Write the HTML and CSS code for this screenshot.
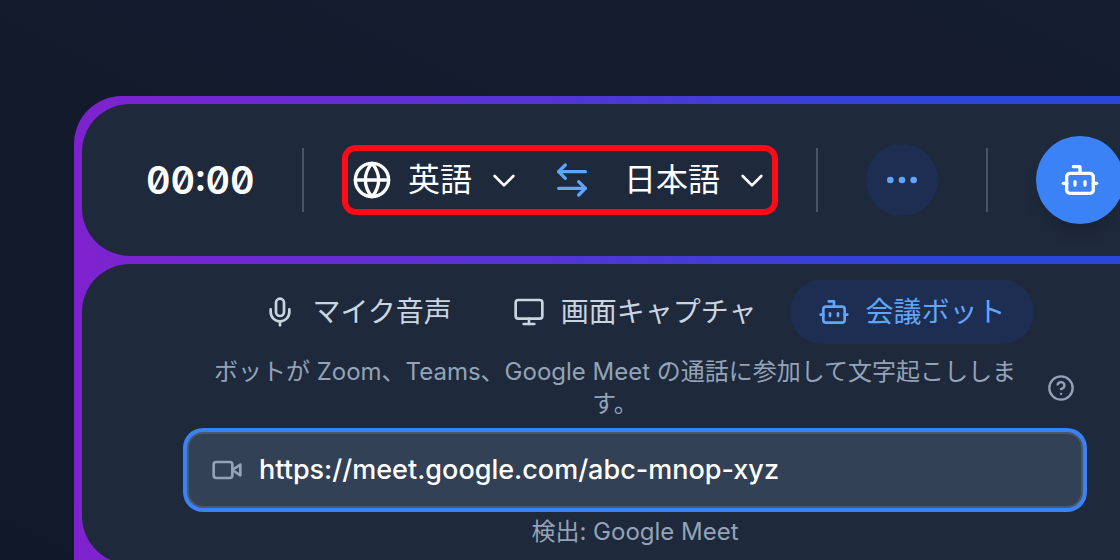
FILE: index.html
```html
<!DOCTYPE html>
<html lang="ja">
<head>
  <meta charset="UTF-8" />
  <title>会議ボット</title>
  <link rel="stylesheet" href="styles.css">
</head>
<body>

  <main class="card">

    <!-- Toolbar -->
    <header class="panel toolbar">
      <time class="timer">00:00</time>
      <span class="divider"></span>

      <div class="languages">
        <svg class="icon icon-lg" viewBox="0 0 24 24"><circle cx="12" cy="12" r="10"/><path d="M2 12h20"/><path d="M12 2a15.3 15.3 0 0 1 4 10 15.3 15.3 0 0 1-4 10 15.3 15.3 0 0 1-4-10 15.3 15.3 0 0 1 4-10z"/></svg>
        <label class="language">
          <select aria-label="翻訳元の言語">
            <option>英語</option>
          </select>
          <svg class="icon" viewBox="0 0 24 24"><path d="M19 9l-7 7-7-7"/></svg>
        </label>
        <button class="swap" type="button" aria-label="言語を入れ替え">
          <svg class="icon icon-lg" viewBox="0 0 24 24"><path d="M8 3 4 7l4 4"/><path d="M4 7h16"/><path d="m16 21 4-4-4-4"/><path d="M20 17H4"/></svg>
        </button>
        <label class="language">
          <select aria-label="翻訳先の言語">
            <option>日本語</option>
          </select>
          <svg class="icon" viewBox="0 0 24 24"><path d="M19 9l-7 7-7-7"/></svg>
        </label>
      </div>

      <span class="divider"></span>
      <button class="more" type="button" aria-label="その他">
        <svg class="icon icon-lg icon-solid" viewBox="0 0 24 24"><circle cx="5" cy="12" r="2"/><circle cx="12" cy="12" r="2"/><circle cx="19" cy="12" r="2"/></svg>
      </button>
      <span class="divider"></span>
      <button class="start" type="button" aria-label="ボットを開始">
        <svg class="icon icon-lg" viewBox="0 0 24 24"><path d="M12 8V4H8"/><rect x="4" y="8" width="16" height="12" rx="2"/><path d="M2 14h2"/><path d="M20 14h2"/><path d="M15 13v2"/><path d="M9 13v2"/></svg>
      </button>
    </header>

    <!-- Audio source -->
    <section class="panel source">
      <nav class="tabs">
        <button class="tab" type="button">
          <svg class="icon" viewBox="0 0 24 24"><rect x="9" y="2" width="6" height="13" rx="3"/><path d="M19 10v2a7 7 0 0 1-14 0v-2"/><path d="M12 19v3"/></svg>
          マイク音声
        </button>
        <button class="tab" type="button">
          <svg class="icon" viewBox="0 0 24 24"><rect x="2" y="3" width="20" height="14" rx="2"/><path d="M8 21h8"/><path d="M12 17v4"/></svg>
          画面キャプチャ
        </button>
        <button class="tab active" type="button">
          <svg class="icon" viewBox="0 0 24 24"><path d="M12 8V4H8"/><rect x="4" y="8" width="16" height="12" rx="2"/><path d="M2 14h2"/><path d="M20 14h2"/><path d="M15 13v2"/><path d="M9 13v2"/></svg>
          会議ボット
        </button>
      </nav>

      <div class="meeting">
        <div class="hint">
          <p>ボットが Zoom、Teams、Google Meet の通話に参加して文字起こしします。</p>
          <button class="help" type="button" aria-label="ヘルプ">
            <svg class="icon icon-sm" viewBox="0 0 24 24"><circle cx="12" cy="12" r="10"/><path d="M9.09 9a3 3 0 0 1 5.83 1c0 2-3 3-3 3"/><path d="M12 17h.01"/></svg>
          </button>
        </div>

        <label class="url">
          <svg class="icon" viewBox="0 0 24 24"><rect x="2" y="6" width="14" height="12" rx="2"/><path d="m16 12 6 4V8l-6 4z"/></svg>
          <input type="url" value="https://meet.google.com/abc-mnop-xyz" aria-label="会議のURL">
        </label>
        <p class="detected">検出: Google Meet</p>
      </div>
    </section>

    <section class="panel transcript"></section>
  </main>

</body>
</html>
```
FILE: styles.css
```css
:root {
  --panel: #1e293b;
  --field: #334156;
  --line: #475569;
  --blue: #3b82f6;
  --blue-light: #60a5fa;
  --blue-dark: #1d2e52;
  --text: #cbd5e1;
  --muted: #94a3b8;
  --mark: #ff0a16;
}
* {
  box-sizing: border-box;
}
body {
  margin: 0;
  padding: 96px 0 0 74px;
  height: 100vh;
  overflow: hidden;
  background: linear-gradient(to top right, #111829, #151d30);
  color: var(--text);
  font-family: Inter, "Noto Sans CJK JP", sans-serif;
  font-size: 24px;
  line-height: 32px;
}
p {
  margin: 0;
}
button,
select,
input {
  font: inherit;
  color: inherit;
  background: none;
  border: none;
  padding: 0;
}
button {
  display: flex;
  align-items: center;
  justify-content: center;
  cursor: pointer;
}

/* icons */
.icon {
  width: 32px;
  height: 32px;
  flex: none;
  fill: none;
  stroke: currentColor;
  stroke-width: 2;
  stroke-linecap: round;
  stroke-linejoin: round;
}
.icon-lg {
  width: 40px;
  height: 40px;
}
.icon-sm {
  width: 28px;
  height: 28px;
}
.icon-solid {
  fill: currentColor;
  stroke: none;
}

/* card, the gradient shows between the panels */
.card {
  display: flex;
  flex-direction: column;
  gap: 8px;
  width: max-content;
  padding: 8px;
  border-radius: 48px;
  background: linear-gradient(to right, #7e22ce, #2748d9 84%);
}
.panel {
  border-radius: 48px;
  background: var(--panel);
}
.transcript {
  height: 160px;
}

/* toolbar */
.toolbar {
  display: flex;
  align-items: center;
  gap: 48px;
  padding: 32px 64px;
  color: #fff;
}
.timer {
  width: 108px;
  font-size: 38px;
  font-weight: 600;
  font-feature-settings: "tnum", "zero";
}
.divider {
  width: 2px;
  height: 64px;
  background: var(--line);
}
.languages {
  display: flex;
  align-items: center;
  gap: 16px;
  height: 70px;
  margin: 0 -10px;
  padding: 0 4px;
  border: 6px solid var(--mark);
  border-radius: 14px;
}
.language {
  display: flex;
  align-items: center;
  gap: 16px;
}
.language select {
  appearance: none;
  field-sizing: content;
  font-size: 32px;
  line-height: 48px;
}
.swap {
  margin: 0 16px;
  color: var(--blue-light);
}
.more {
  width: 72px;
  height: 72px;
  border-radius: 50%;
  background: var(--blue-dark);
  color: var(--blue-light);
}
.start {
  width: 88px;
  height: 88px;
  border-radius: 50%;
  background: var(--blue);
  box-shadow: 0 12px 16px -4px rgba(0,0,0,0.15);
}

/* audio source */
.source {
  width: 0;
  min-width: 100%;
  padding: 16px;
}
.tabs {
  display: flex;
  justify-content: center;
  gap: 5px;
}
.tab {
  gap: 16px;
  height: 64px;
  padding: 0 28px;
  border-radius: 32px;
  font-size: 28px;
}
.tab.active {
  background: var(--blue-dark);
  color: var(--blue-light);
}
.meeting {
  max-width: 896px;
  margin: 12px auto 0;
  color: var(--muted);
  text-align: center;
}
.hint {
  display: flex;
  align-items: center;
}
.hint p {
  flex: 1;
  padding: 0 16px 0 20px;
}
.help {
  width: 44px;
  height: 44px;
}
.url {
  display: flex;
  align-items: center;
  gap: 16px;
  height: 76px;
  margin: 12px 0 8px;
  padding: 0 24px 0 22px;
  border: 2px solid #4b5869;
  border-radius: 16px;
  background: var(--field);
  box-shadow: 0 0 0 4px var(--blue);
}
.url input {
  flex: 1;
  min-width: 0;
  outline: none;
  color: #fff;
  font-size: 27px;
  font-weight: 500;
}
```
